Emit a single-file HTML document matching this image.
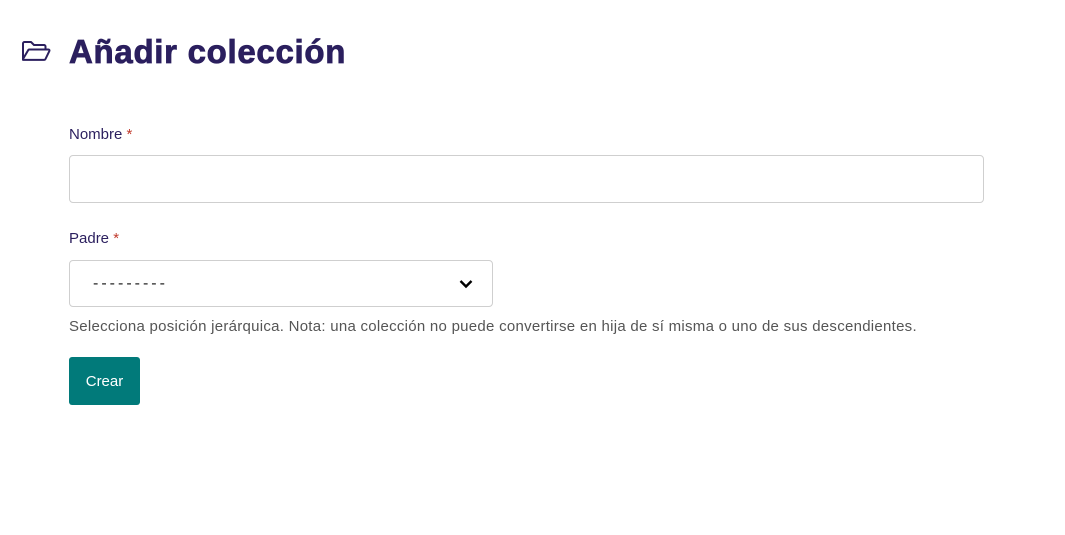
<!DOCTYPE html>
<html><head><meta charset="utf-8"><style>
*{box-sizing:border-box;margin:0;padding:0}
body{width:1065px;height:535px;background:#fff;font-family:"Liberation Sans",sans-serif;position:relative;overflow:hidden}
.abs{position:absolute}
h1{position:absolute;left:69px;top:33px;font-size:33px;font-weight:900;color:#2b1f5e;letter-spacing:0.7px;white-space:nowrap;-webkit-text-stroke:0.8px #2b1f5e}
.lbl{font-size:15px;color:#2b1f5e}
.lbl span{color:#c0392b}
.inp{border:1px solid #cfcfcf;border-radius:4px;background:#fff}
.help{font-size:15px;color:#555;white-space:nowrap;letter-spacing:0.27px}
.btn{background:#017a7a;color:#fff;font-size:15px;border-radius:3px;text-align:center;line-height:50px}
</style></head><body>
<svg class="abs" style="left:21px;top:40px" width="30" height="22" viewBox="0 0 30 22"><path d="M2 19V3.5A1.5 1.5 0 0 1 3.5 2H10l3 3h10a1.5 1.5 0 0 1 1.5 1.5V9M2 19L7 10.5A1.5 1.5 0 0 1 8.3 9.5H27.5a1 1 0 0 1 .9 1.4L24.5 19a1.5 1.5 0 0 1-1.3.9H2z" fill="none" stroke="#2b1f5e" stroke-width="2" stroke-linejoin="round"/></svg>
<h1>Añadir colección</h1>
<div class="abs lbl" style="left:69px;top:126px">Nombre <span>*</span></div>
<div class="abs inp" style="left:69px;top:155px;width:915px;height:48px"></div>
<div class="abs lbl" style="left:69px;top:230px">Padre <span>*</span></div>
<div class="abs inp" style="left:69px;top:260px;width:424px;height:47px"></div>
<div class="abs" style="left:93px;top:275px;font-size:16px;color:#222;letter-spacing:3px">---------</div>
<svg class="abs" style="left:459px;top:279px" width="14" height="10" viewBox="0 0 14 10"><path d="M1.5 2l5.5 5.5L12.5 2" fill="none" stroke="#000" stroke-width="2.4"/></svg>
<div class="abs help" style="left:69px;top:318px">Selecciona posición jerárquica. Nota: una colección no puede convertirse en hija de sí misma o uno de sus descendientes.</div>
<div class="abs btn" style="left:69px;top:357px;width:71px;height:48px">Crear</div>
</body></html>
